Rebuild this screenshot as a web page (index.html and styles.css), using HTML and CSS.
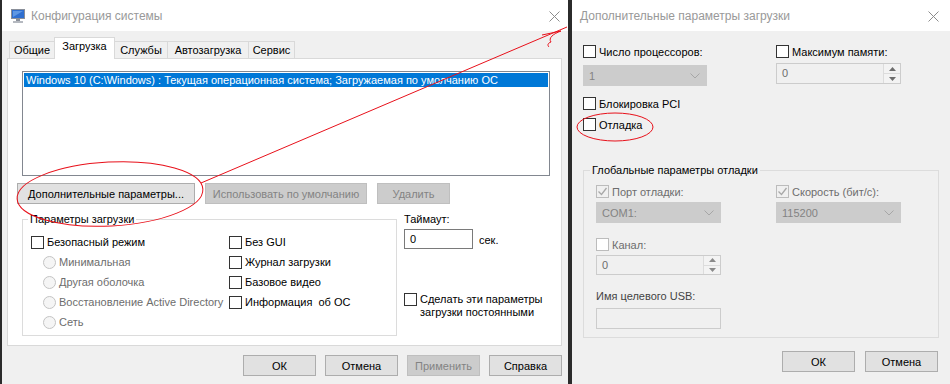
FILE: index.html
```html
<!DOCTYPE html>
<html>

<head>
  <title>Конфигурация системы</title>
  <link rel="stylesheet" href="styles.css">
</head>

<body>
  <div class="desktop">
    <!-- основное окно msconfig -->
    <div class="window main-window">
      <div class="titlebar">
        <svg class="app-icon" width="16" height="16" viewBox="0 0 16 16">
          <rect x="1" y="1" width="14" height="10" fill="#8a8f99" />
          <rect x="2" y="2" width="12" height="8" fill="#2f6fd0" />
          <path d="M3 3 L13 3 L3 9 Z" fill="#7fb3f0" opacity="0.6" />
          <rect x="6" y="11" width="4" height="2" fill="#8a8f99" />
          <rect x="3" y="13" width="10" height="2" fill="#b5b9c0" />
        </svg>
        <span class="title">Конфигурация системы</span>
        <svg class="close-icon" width="11" height="11" viewBox="0 0 11 11">
          <path d="M0.5 0.5 L10.5 10.5 M10.5 0.5 L0.5 10.5" stroke="#8c8c8c" stroke-width="1" />
        </svg>
      </div>
      <div class="client">
        <div class="tabs">
          <div class="tab" style="width: 45px">Общие</div>
          <div class="tab active" style="width: 61px">Загрузка</div>
          <div class="tab" style="width: 52px">Службы</div>
          <div class="tab" style="width: 81px">Автозагрузка</div>
          <div class="tab" style="width: 47px">Сервис</div>
        </div>
        <div class="tab-panel">
          <div class="os-list">
            <div class="os-item selected">Windows 10 (C:\Windows) : Текущая операционная система; Загружаемая по умолчанию ОС</div>
          </div>
          <div class="button-row">
            <button class="btn btn-advanced">Дополнительные параметры...</button>
            <button class="btn btn-default" disabled>Использовать по умолчанию</button>
            <button class="btn btn-delete" disabled>Удалить</button>
          </div>
          <div class="boot-area">
            <fieldset class="group boot-options">
              <legend>Параметры загрузки</legend>
              <div class="boot-grid">
                <div class="col">
                  <div class="check"><span class="box"></span>Безопасный режим</div>
                  <div class="radio disabled"><span class="circle"></span>Минимальная</div>
                  <div class="radio disabled"><span class="circle"></span>Другая оболочка</div>
                  <div class="radio disabled"><span class="circle"></span>Восстановление Active Directory</div>
                  <div class="radio disabled"><span class="circle"></span>Сеть</div>
                </div>
                <div class="col">
                  <div class="check"><span class="box"></span>Без GUI</div>
                  <div class="check"><span class="box"></span>Журнал загрузки</div>
                  <div class="check"><span class="box"></span>Базовое видео</div>
                  <div class="check"><span class="box"></span>Информация&nbsp; об ОС</div>
                </div>
              </div>
            </fieldset>
            <div class="timeout">
              <div class="timeout-label">Таймаут:</div>
              <div class="timeout-row">
                <div class="text-input">0</div>
                <span class="unit">сек.</span>
              </div>
              <div class="check multi"><span class="box"></span><span>Сделать эти параметры<br>загрузки постоянными</span></div>
            </div>
          </div>
        </div>
        <div class="dialog-buttons">
          <button class="btn">ОК</button>
          <button class="btn">Отмена</button>
          <button class="btn" disabled>Применить</button>
          <button class="btn">Справка</button>
        </div>
      </div>
    </div>

    <!-- окно дополнительных параметров -->
    <div class="window adv-window">
      <div class="titlebar">
        <span class="title adv-title">Дополнительные параметры загрузки</span>
        <svg class="close-icon" width="11" height="11" viewBox="0 0 11 11">
          <path d="M0.5 0.5 L10.5 10.5 M10.5 0.5 L0.5 10.5" stroke="#8c8c8c" stroke-width="1" />
        </svg>
      </div>
      <div class="adv-client">
        <div class="adv-top">
          <div class="adv-col first">
            <div class="check"><span class="box"></span>Число процессоров:</div>
            <div class="combo disabled">1<svg width="10" height="6" viewBox="0 0 10 6"><path d="M0.5 0.5 L5 5 L9.5 0.5" stroke="#a6a6a6" fill="none" /></svg></div>
          </div>
          <div class="adv-col">
            <div class="check"><span class="box"></span>Максимум памяти:</div>
            <div class="spin disabled memory">
              <span class="spin-value">0</span>
              <span class="spin-arrows">
                <span class="arrow"><svg width="7" height="4" viewBox="0 0 7 4"><path d="M0 4 L3.5 0 L7 4 Z" fill="#6d6d6d" /></svg></span>
                <span class="arrow"><svg width="7" height="4" viewBox="0 0 7 4"><path d="M0 0 L3.5 4 L7 0 Z" fill="#6d6d6d" /></svg></span>
              </span>
            </div>
          </div>
        </div>
        <div class="check pci"><span class="box"></span>Блокировка PCI</div>
        <div class="check debug"><span class="box"></span>Отладка</div>

        <fieldset class="group debug-group">
          <legend>Глобальные параметры отладки</legend>
          <div class="debug-grid">
            <div class="adv-col narrow">
              <div class="check disabled"><span class="box checked"><svg width="11" height="11" viewBox="0 0 11 11"><path d="M1.5 5.5 L4.5 8.5 L9.5 2" stroke="#a8a8a8" stroke-width="1.3" fill="none" /></svg></span>Порт отладки:</div>
              <div class="combo disabled">COM1:<svg width="10" height="6" viewBox="0 0 10 6"><path d="M0.5 0.5 L5 5 L9.5 0.5" stroke="#a6a6a6" fill="none" /></svg></div>
            </div>
            <div class="adv-col">
              <div class="check disabled"><span class="box checked"><svg width="11" height="11" viewBox="0 0 11 11"><path d="M1.5 5.5 L4.5 8.5 L9.5 2" stroke="#a8a8a8" stroke-width="1.3" fill="none" /></svg></span>Скорость (бит/с):</div>
              <div class="combo disabled">115200<svg width="10" height="6" viewBox="0 0 10 6"><path d="M0.5 0.5 L5 5 L9.5 0.5" stroke="#a6a6a6" fill="none" /></svg></div>
            </div>
          </div>
          <div class="check disabled channel"><span class="box"></span>Канал:</div>
          <div class="spin disabled channel-spin">
            <span class="spin-value">0</span>
            <span class="spin-arrows">
              <span class="arrow"><svg width="7" height="4" viewBox="0 0 7 4"><path d="M0 4 L3.5 0 L7 4 Z" fill="#8a8a8a" /></svg></span>
              <span class="arrow"><svg width="7" height="4" viewBox="0 0 7 4"><path d="M0 0 L3.5 4 L7 0 Z" fill="#8a8a8a" /></svg></span>
            </span>
          </div>
          <div class="usb-label">Имя целевого USB:</div>
          <div class="usb-input"></div>
        </fieldset>

        <div class="dialog-buttons adv-buttons">
          <button class="btn">ОК</button>
          <button class="btn">Отмена</button>
        </div>
      </div>
    </div>

    <!-- красные пометки поверх окон -->
    <svg class="annotations" width="950" height="384" viewBox="0 0 950 384">
      <ellipse cx="110" cy="194" rx="93" ry="32" fill="none" stroke="#e8101a" stroke-width="1" transform="rotate(-3 110 194)" />
      <ellipse cx="615" cy="127" rx="38" ry="14" fill="none" stroke="#e8101a" stroke-width="1" />
      <path d="M201 183 L567 27" stroke="#e8101a" stroke-width="1" fill="none" />
      <path d="M542 35 L561 31" stroke="#e8101a" stroke-width="1" fill="none" />
      <path d="M561 31 C553 34 548 38 551 42 C548 43 547 45 549 47" stroke="#e8101a" stroke-width="1" fill="none" />
    </svg>
  </div>
</body>

</html>
```

FILE: styles.css
```css
body {
  margin: 0;
  background: #2b2b2b;
  font-family: "Liberation Sans", Arial, sans-serif;
  font-size: 11px;
  color: #000;
}

.desktop {
  position: relative;
  display: flex;
  width: 950px;
  height: 384px;
  overflow: hidden;
}

.window {
  height: 384px;
  background: #f0f0f0;
}

.main-window {
  width: 566px;
  margin-left: 2px;
}

.adv-window {
  width: 378px;
  margin-left: 4px;
}

.titlebar {
  height: 31px;
  background: #fff;
  display: flex;
  align-items: center;
}

.app-icon {
  margin-left: 8px;
  margin-right: 5px;
}

.title {
  flex: 1;
  color: #999;
  font-size: 12px;
}

.adv-title {
  margin-left: 8px;
}

.close-icon {
  margin-right: 8px;
  margin-top: 1px;
}

.adv-window .close-icon {
  margin-right: 11px;
}

/* вкладки */
.client {
  padding: 6px 6px 0 5px;
}

.tabs {
  display: flex;
  align-items: flex-end;
  height: 21px;
  margin-left: 2px;
}

.tab {
  box-sizing: border-box;
  height: 17px;
  line-height: 16px;
  text-align: center;
  border: 1px solid #d9d9d9;
  border-bottom: none;
  border-right: none;
  background: #f0f0f0;
}

.tab:last-child {
  border-right: 1px solid #d9d9d9;
}

.tab.active {
  position: relative;
  z-index: 1;
  height: 22px;
  line-height: 17px;
  margin-bottom: -1px;
  background: #fff;
  border-right: 1px solid #d9d9d9;
}

.tab.active + .tab {
  border-left: none;
}

.tab-panel {
  box-sizing: border-box;
  height: 288px;
  background: #fff;
  border: 1px solid #d9d9d9;
  padding: 12px 0 0 9px;
}

.os-list {
  box-sizing: border-box;
  width: 528px;
  height: 105px;
  margin-left: 5px;
  border: 1px solid #828790;
  padding: 1px;
}

.os-item {
  height: 14px;
  line-height: 14px;
  padding-left: 2px;
  white-space: nowrap;
  overflow: hidden;
}

.os-item.selected {
  background: #0078d7;
  color: #fff;
}

/* кнопки */
.btn {
  box-sizing: border-box;
  height: 21px;
  padding: 0;
  font-family: inherit;
  font-size: 11px;
  color: #000;
  background: #e1e1e1;
  border: 1px solid #adadad;
}

.btn:disabled {
  background: #cccccc;
  border-color: #bfbfbf;
  color: #838383;
}

.button-row {
  display: flex;
  gap: 10px;
  margin-top: 7px;
}

.btn-advanced {
  width: 178px;
}

.btn-default {
  width: 162px;
}

.btn-delete {
  width: 73px;
}

.dialog-buttons {
  display: flex;
  justify-content: flex-end;
  gap: 9px;
  margin-top: 9px;
  padding-right: 0;
}

.dialog-buttons .btn {
  width: 73px;
}

/* группы */
.group {
  margin: 0;
  border: 1px solid #dcdcdc;
  min-width: 0;
}

.group legend {
  padding: 0 2px;
  line-height: 16px;
}

.boot-area {
  display: flex;
  margin-top: 7px;
}

.boot-options {
  box-sizing: border-box;
  width: 375px;
  margin-left: 5px;
  padding: 5px 0 3px 8px;
}

.boot-options legend {
  margin-left: -3px;
}

.boot-grid {
  display: grid;
  grid-template-columns: 198px 1fr;
}

.check,
.radio {
  display: flex;
  align-items: center;
  height: 20px;
  white-space: nowrap;
}

.box {
  box-sizing: border-box;
  width: 13px;
  height: 13px;
  border: 1px solid #333;
  background: #fff;
  margin-right: 3px;
  flex: none;
}

.disabled .box {
  border-color: #bcbcbc;
}

.box.checked {
  background: #f0f0f0;
  display: flex;
  align-items: center;
  justify-content: center;
}

.disabled {
  color: #6d6d6d;
}

.radio .circle {
  box-sizing: border-box;
  width: 13px;
  height: 13px;
  border-radius: 50%;
  border: 1px solid #c4c4c4;
  background: #f5f5f5;
  margin-left: 12px;
  margin-right: 3px;
  flex: none;
}

.radio {
  color: #6d6d6d;
}

.timeout {
  margin-left: 7px;
}

.timeout-label {
  line-height: 16px;
}

.timeout-row {
  display: flex;
  align-items: center;
  margin-top: 2px;
}

.text-input {
  box-sizing: border-box;
  width: 69px;
  height: 20px;
  border: 1px solid #7a7a7a;
  background: #fff;
  padding-left: 5px;
  line-height: 18px;
}

.unit {
  margin-left: 6px;
  margin-top: 2px;
}

.check.multi {
  align-items: flex-start;
  height: auto;
  margin-top: 44px;
  line-height: 13px;
}

/* окно дополнительных параметров */
.adv-client {
  padding: 0 10px 0 11px;
}

.adv-top {
  display: flex;
  margin-top: 13px;
}

.adv-col {
  display: flex;
  flex-direction: column;
}

.adv-col.first {
  width: 193px;
}

.adv-col .check {
  height: 15px;
}

.combo {
  box-sizing: border-box;
  width: 124px;
  height: 21px;
  margin-top: 6px;
  display: flex;
  align-items: center;
  justify-content: space-between;
  padding: 0 6px 0 5px;
  background: #cccccc;
  border: 1px solid #cccccc;
  color: #838383;
}

.spin {
  box-sizing: border-box;
  width: 125px;
  height: 21px;
  display: flex;
  border: 1px solid #cccccc;
  background: #f0f0f0;
}

.spin.memory {
  margin-top: 4px;
}

.spin-value {
  flex: 1;
  padding-left: 5px;
  line-height: 19px;
  color: #6d6d6d;
}

.spin-arrows {
  width: 16px;
  display: flex;
  flex-direction: column;
  border-left: 1px solid #dcdcdc;
}

.arrow {
  flex: 1;
  display: flex;
  align-items: center;
  justify-content: center;
  background: #f3f3f3;
  border-bottom: 1px solid #dcdcdc;
}

.arrow:last-child {
  border-bottom: none;
}

.check.pci {
  height: 15px;
  margin-top: 10px;
}

.check.debug {
  height: 15px;
  margin-top: 6px;
}

.debug-group {
  box-sizing: border-box;
  width: 356px;
  margin-top: 30px;
  padding: 6px 0 8px 12px;
}

.debug-group legend {
  margin-left: -6px;
}

.debug-grid {
  display: flex;
}

.adv-col.narrow {
  width: 180px;
}

.debug-grid .combo {
  width: 125px;
  margin-top: 3px;
}

.debug-group .check.channel {
  height: 15px;
  margin-top: 14px;
}

.channel-spin {
  margin-top: 3px;
  height: 20px;
}

.usb-label {
  margin-top: 14px;
  line-height: 15px;
  color: #444;
}

.usb-input {
  box-sizing: border-box;
  width: 125px;
  height: 21px;
  margin-top: 4px;
  border: 1px solid #cccccc;
  background: #f0f0f0;
}

.adv-buttons {
  margin-top: 13px;
  gap: 10px;
  padding-right: 2px;
}

.annotations {
  position: absolute;
  left: 0;
  top: 0;
  pointer-events: none;
}
```
